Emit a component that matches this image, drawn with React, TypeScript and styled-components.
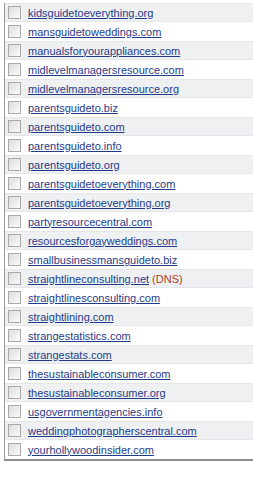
import React from "react";
import styled, { createGlobalStyle } from "styled-components";

const Global = createGlobalStyle`
  html, body {
    margin: 0;
    padding: 0;
    background: #ffffff;
  }
`;

const Page = styled.div`
  width: 253px;
  height: 477px;
  overflow: hidden;
  padding-top: 3px;
  box-sizing: border-box;
`;

const Table = styled.div`
  margin-left: 4px;
  width: 260px;
  border-left: 1px solid #9a9a9a;
  border-bottom: 2px solid #8c8c8c;
  display: flex;
  flex-direction: column;
`;

const Row = styled.div<{ $shaded: boolean }>`
  height: 19px;
  box-sizing: border-box;
  display: flex;
  align-items: center;
  padding-left: 3px;
  background: ${({ $shaded }) => ($shaded ? "#eef0f2" : "#ffffff")};
  border-top: 1px solid ${({ $shaded }) => ($shaded ? "#e4e7ea" : "#ffffff")};
  border-bottom: 1px solid ${({ $shaded }) => ($shaded ? "#e4e7ea" : "#ffffff")};
`;

const Box = styled.span`
  width: 11px;
  height: 11px;
  border: 1px solid #a9a9a9;
  background: linear-gradient(135deg, #dcdcdc 0%, #f2f2f2 70%, #fbfbfb 100%);
  flex: none;
`;

const Link = styled.a`
  margin-left: 7px;
  font-family: "Liberation Sans", Arial, sans-serif;
  font-size: 11px;
  color: #1f3c8a;
  text-decoration: underline;
  white-space: nowrap;
`;

const Dns = styled.span`
  margin-left: 3px;
  font-family: "Liberation Sans", Arial, sans-serif;
  font-size: 11px;
  color: #b23b1e;
`;

const domains = [
  "kidsguidetoeverything.org",
  "mansguidetoweddings.com",
  "manualsforyourappliances.com",
  "midlevelmanagersresource.com",
  "midlevelmanagersresource.org",
  "parentsguideto.biz",
  "parentsguideto.com",
  "parentsguideto.info",
  "parentsguideto.org",
  "parentsguidetoeverything.com",
  "parentsguidetoeverything.org",
  "partyresourcecentral.com",
  "resourcesforgayweddings.com",
  "smallbusinessmansguideto.biz",
  "straightlineconsulting.net",
  "straightlinesconsulting.com",
  "straightlining.com",
  "strangestatistics.com",
  "strangestats.com",
  "thesustainableconsumer.com",
  "thesustainableconsumer.org",
  "usgovernmentagencies.info",
  "weddingphotographerscentral.com",
  "yourhollywoodinsider.com",
];

const App: React.FC = (): JSX.Element => (
  <>
    <Global />
    <Page>
      <Table>
        {domains.map((d, i) => (
          <Row key={d} $shaded={i % 2 === 0}>
            <Box />
            <Link href="#">{d}</Link>
            {d === "straightlineconsulting.net" && <Dns>(DNS)</Dns>}
          </Row>
        ))}
      </Table>
    </Page>
  </>
);

export default App;
